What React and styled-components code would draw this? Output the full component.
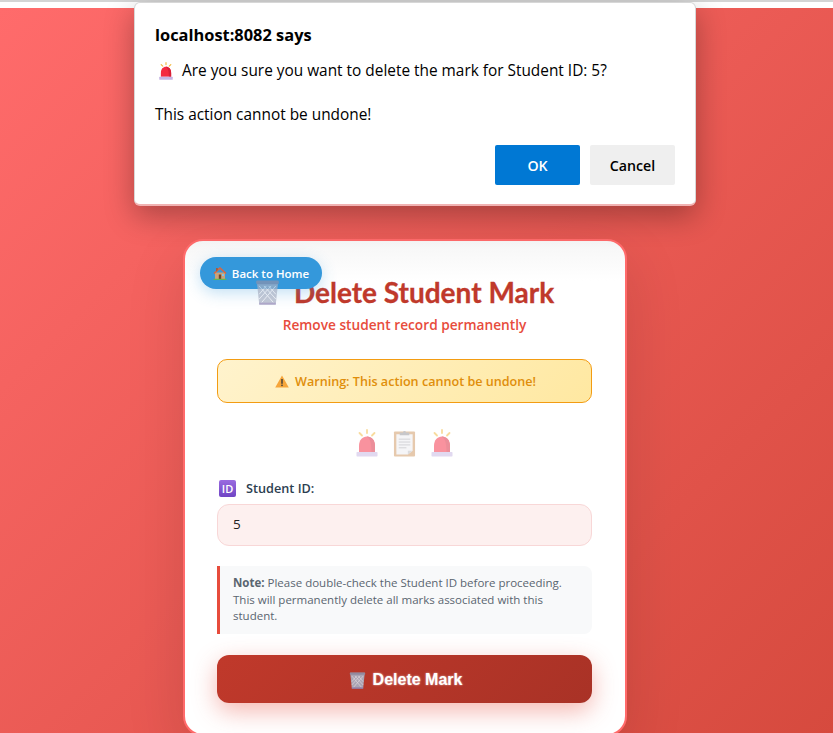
import React from "react";
import styled, { createGlobalStyle } from "styled-components";

const Global = createGlobalStyle`
  html, body { margin: 0; padding: 0; height: 733px; overflow: hidden; }
  * { box-sizing: border-box; }
  body { font-family: "Open Sans", "Noto Sans", sans-serif; }
`;

function Siren({ width = 24, height = 28, pale }) {
  return (
    <svg width={width} height={height} viewBox="0 0 24 28" style={{ opacity: pale ? 0.5 : 1 }}>
      <path d="M12 1v3M4.500 4l2.500 2.500M19.500 4L17 6.500" stroke="#f3b93d" strokeWidth="1.800" strokeLinecap="round" fill="none" />
      <path d="M4 23v-6c0-6 3.500-9.500 8-9.500s8 3.500 8 9.500v6z" fill="#f4283f" />
      <path d="M12 8c3 2 4.500 5 4.500 15H20v-6c0-6-3.500-9.500-8-9.500z" fill="#d81f36" />
      <rect x="1.500" y="23" width="21" height="4.500" rx="0.800" fill="#c5b4e3" />
    </svg>
  );
}

function Clipboard() {
  return (
    <svg width="23" height="28" viewBox="0 0 24 28" style={{ opacity: 0.45 }}>
      <rect x="1" y="2" width="22" height="26" rx="1" fill="#c98a4b" />
      <path d="M3.500 5h17v17l-5 4h-12z" fill="#e9e9ee" />
      <path d="M15.500 26v-4h5z" fill="#b3b3b8" />
      <path d="M6 10h12M6 13h12M6 16h12M6 19h8" stroke="#8b8b93" strokeWidth="0.800" />
      <path d="M7 6V3h3.500a1.500 1.500 0 0 1 3 0H17v3z" fill="#85858c" />
    </svg>
  );
}

function Bin({ size = 24, faded }) {
  return (
    <svg width={size} height={size} viewBox="2 2 20 21" style={{ opacity: faded ? 0.7 : 0.9 }}>
      <path d="M3 3h18l-2 19H5z" fill="#a9b1c4" />
      <path d="M5 7l12 14M9 7l10 11M13 7l6 7M19 7L7 21M15 7L5 18M11 7l-6 7" stroke="#e7eaf1" strokeWidth="0.800" />
      <rect x="2.500" y="2.500" width="19" height="3" rx="1" fill="#8e92ab" />
      <rect x="5" y="21" width="14" height="1.800" fill="#8e84b4" />
    </svg>
  );
}

function House() {
  return (
    <svg width="14" height="14" viewBox="0 0 14 14">
      <path d="M2 6.500h10V13H2z" fill="#c9a27a" />
      <path d="M0.500 7L7 1l6.500 6-1 1L7 3 1.500 8z" fill="#e0653a" />
      <path d="M3 2h1.800v2L3 5.500z" fill="#a85a3a" />
      <rect x="5.800" y="8.500" width="2.400" height="4.500" fill="#6a4630" />
      <rect x="9" y="8" width="2" height="2" fill="#7ec4e6" />
      <rect x="0.500" y="12.800" width="13" height="1.200" fill="#5fb55a" />
    </svg>
  );
}

function WarnIcon() {
  return (
    <svg width="14" height="13" viewBox="0 0 14 13">
      <path d="M7 0.500L13.800 12.500H0.200z" fill="#f6a53a" />
      <rect x="6.300" y="4" width="1.400" height="4.800" fill="#3a3a3a" />
      <rect x="6.300" y="9.600" width="1.400" height="1.500" fill="#3a3a3a" />
    </svg>
  );
}

function IdIcon() {
  return (
    <svg width="17" height="17" viewBox="0 0 17 17">
      <defs>
        <linearGradient id="idBg" x1="0" y1="0" x2="0" y2="1">
          <stop offset="0" stopColor="#9a6be0" />
          <stop offset="1" stopColor="#6f44c4" />
        </linearGradient>
      </defs>
      <rect width="17" height="17" rx="2" fill="url(#idBg)" />
      <text x="8.500" y="12.800" textAnchor="middle" fontFamily="Open Sans, sans-serif" fontSize="11" fill="#fff">ID</text>
    </svg>
  );
}

export default function App() {
  return (
    <>
      <Global />
      <Page>
        <ChromeEdge />
        <Main>
          <Card>
            <BackButton>
              <House /> Back to Home
            </BackButton>
            <Title>
              <Bin size={25} faded /> Delete Student Mark
            </Title>
            <Subtitle>Remove student record permanently</Subtitle>
            <Warning>
              <WarnIcon /> Warning: This action cannot be undone!
            </Warning>
            <IconRow>
              <Siren pale />
              <Clipboard />
              <Siren pale />
            </IconRow>
            <Label>
              <IdIcon /> Student ID:
            </Label>
            <Input readOnly value="5" />
            <Note>
              <strong>Note:</strong> Please double-check the Student ID before proceeding. This will
              permanently delete all marks associated with this student.
            </Note>
            <DeleteButton>
              <Bin size={17} /> Delete Mark
            </DeleteButton>
          </Card>
        </Main>
        <Dialog>
          <DialogTitle>localhost:8082 says</DialogTitle>
          <DialogLine>
            <Siren width={16} height={18} /> Are you sure you want to delete the mark for Student ID: 5?
          </DialogLine>
          <DialogText>This action cannot be undone!</DialogText>
          <DialogActions>
            <OkButton>OK</OkButton>
            <CancelButton>Cancel</CancelButton>
          </DialogActions>
        </Dialog>
      </Page>
    </>
  );
}

const Page = styled.div`
  position: relative;
  width: 833px;
  height: 733px;
  overflow: hidden;
  display: flex;
  flex-direction: column;
  background: #fff;
`;

const ChromeEdge = styled.div`
  height: 8px;
  flex: none;
  background: #fff;
  border-top: 2px solid #d4d4d4;
`;

const Main = styled.main`
  flex: 1;
  display: flex;
  justify-content: center;
  align-items: flex-start;
  padding: 231px 23px 0 0;
  background: linear-gradient(135deg, #ff6b6b 0%, #d64a3e 100%);
`;

const Card = styled.div`
  position: relative;
  flex: none;
  width: 444px;
  height: 497px;
  padding: 37px 33px 0 32px;
  border: 2px solid #ff6b6b;
  border-radius: 20px;
  background: linear-gradient(180deg, #f6f6f6 0, #fff 40px);
  box-shadow: 0 20px 60px rgba(0, 0, 0, 0.12);
`;

const BackButton = styled.a`
  position: absolute;
  top: 16px;
  left: 15px;
  width: 122px;
  height: 32px;
  display: flex;
  align-items: center;
  justify-content: center;
  gap: 5px;
  border-radius: 16px;
  background: #3498db;
  color: #fff;
  font-size: 11.500px;
  font-weight: 600;
  box-shadow: 0 4px 15px rgba(52, 152, 219, 0.3);
`;

const Title = styled.h1`
  margin: 0;
  display: flex;
  align-items: center;
  justify-content: center;
  gap: 14px;
  height: 28px;
  font-family: Lato, "Open Sans", sans-serif;
  font-size: 28px;
  font-weight: 700;
  color: #c0392b;
  -webkit-text-stroke: 0.3px #c0392b;
`;

const Subtitle = styled.p`
  margin: 9px 0 0;
  text-align: center;
  font-size: 13.700px;
  font-weight: 600;
  color: #e74c3c;
  line-height: 20px;
`;

const Warning = styled.div`
  margin-top: 24px;
  height: 44px;
  display: flex;
  align-items: center;
  justify-content: center;
  gap: 6px;
  padding-left: 2px;
  border: 1px solid #f39c12;
  border-radius: 10px;
  background: linear-gradient(135deg, #fff3cd, #ffe8a1);
  color: #e08e0b;
  font-size: 12.600px;
  font-weight: 600;
`;

const IconRow = styled.div`
  margin-top: 26px;
  height: 28px;
  display: flex;
  justify-content: center;
  align-items: flex-end;
  gap: 14px;
`;

const Label = styled.label`
  margin-top: 22px;
  display: flex;
  align-items: center;
  gap: 10px;
  height: 18px;
  padding-left: 2px;
  color: #2c3e50;
  font-size: 12.700px;
  font-weight: 600;
`;

const Input = styled.input`
  display: block;
  width: 100%;
  height: 42px;
  margin-top: 7px;
  padding: 0 15px 2px;
  border: 1px solid #f8d7d7;
  border-radius: 12px;
  background: #fdf0ef;
  color: #222;
  font-family: inherit;
  font-size: 13.500px;
  outline: none;
`;

const Note = styled.div`
  margin-top: 20px;
  padding: 9px 20px 9px 13px;
  border-left: 3px solid #e74c3c;
  border-radius: 0 8px 8px 0;
  background: #f8f9fa;
  color: #5a6570;
  font-size: 11.500px;
  line-height: 16.500px;
  strong { font-weight: 700; }
`;

const DeleteButton = styled.button`
  display: flex;
  align-items: center;
  justify-content: center;
  gap: 7px;
  width: 100%;
  height: 48px;
  margin: 21px 0 0;
  padding: 3px 0 0 2px;
  border: none;
  border-radius: 12px;
  background: linear-gradient(135deg, #c0392b, #a93226);
  box-shadow: 0 8px 25px rgba(231, 76, 60, 0.4);
  color: #fff;
  font-family: "Liberation Sans", Arial, sans-serif;
  font-size: 16px;
  font-weight: 700;
  text-shadow: 0 0 2px rgba(255, 255, 255, 0.7);
`;

const Dialog = styled.div`
  position: absolute;
  top: 2px;
  left: 134px;
  width: 562px;
  height: 204px;
  padding: 20px 20px 0;
  border: 1px solid rgba(190, 190, 190, 0.6);
  border-bottom: 2px solid rgba(240, 170, 170, 0.9);
  border-radius: 6px;
  background: #fff;
  box-shadow: 0 10px 30px rgba(0, 0, 0, 0.3);
  color: #000;
`;

const DialogTitle = styled.div`
  font-size: 16.400px;
  font-weight: 700;
  line-height: 24px;
`;

const DialogLine = styled.div`
  display: flex;
  align-items: center;
  gap: 8px;
  margin-top: 13px;
  padding-left: 3px;
  font-size: 15.400px;
  line-height: 22px;
`;

const DialogText = styled.div`
  margin-top: 22px;
  font-size: 15.400px;
  line-height: 22px;
`;

const DialogActions = styled.div`
  display: flex;
  justify-content: flex-end;
  gap: 10px;
  margin-top: 19px;
`;

const OkButton = styled.button`
  width: 85px;
  height: 40px;
  border: none;
  border-radius: 2px;
  background: #0078d4;
  color: #fff;
  font-family: inherit;
  font-size: 14.200px;
  font-weight: 600;
`;

const CancelButton = styled(OkButton)`
  background: #efefef;
  color: #000;
`;
